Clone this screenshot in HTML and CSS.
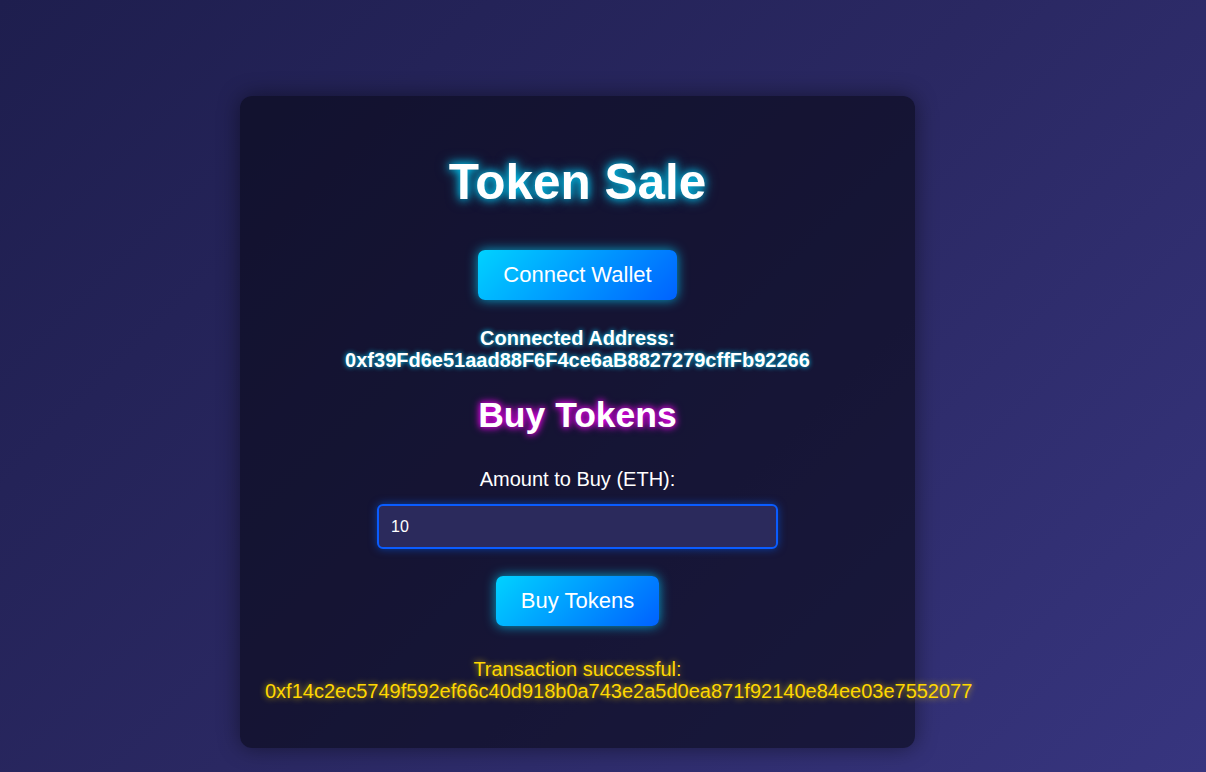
FILE: index.html
```html
<!DOCTYPE html>
<html lang="en">
<head>
<meta charset="utf-8">
<title>Token Sale</title>
<link rel="stylesheet" href="styles.css">
</head>
<body>
  <main class="card">
    <h1 class="title">Token Sale</h1>
    <button class="btn btn-connect" type="button">Connect Wallet</button>
    <p class="address">Connected Address: 0xf39Fd6e51aad88F6F4ce6aB8827279cffFb92266</p>
    <h2 class="subtitle">Buy Tokens</h2>
    <label class="label" for="amount">Amount to Buy (ETH):</label>
    <input class="amount" id="amount" type="text" value="10">
    <button class="btn btn-buy" type="button">Buy Tokens</button>
    <p class="status">Transaction successful: 0xf14c2ec5749f592ef66c40d918b0a743e2a5d0ea871f92140e84ee03e7552077</p>
  </main>
</body>
</html>
```
FILE: styles.css
```css
html, body {
  margin: 0;
}

body {
  min-height: 100vh;
  box-sizing: border-box;
  padding: 96px 51px 0 0;
  background: linear-gradient(135deg, #1e1e4e 0%, #2a2862 50%, #37357f 100%);
  font-family: "Liberation Sans", Arial, sans-serif;
  color: #ffffff;
}

.card {
  width: 675px;
  height: 652px;
  box-sizing: border-box;
  margin: 0 auto;
  padding: 25px;
  border-radius: 12px;
  background: rgba(10, 10, 25, 0.63);
  box-shadow: 0 0 22px rgba(0, 0, 0, 0.45);
  display: flex;
  flex-direction: column;
  align-items: center;
  text-align: center;
}

.title {
  margin: 33px 0 40px;
  font-size: 49.5px;
  line-height: 56px;
  font-weight: bold;
  color: #ffffff;
  text-shadow: 0 0 8px #00d4ff, 0 0 14px rgba(0, 212, 255, 0.6);
}

.btn {
  border: none;
  border-radius: 7px;
  padding: 12px 25px;
  font-family: "Liberation Sans", Arial, sans-serif;
  font-size: 22px;
  line-height: 26px;
  color: #ffffff;
  background: linear-gradient(135deg, #00d2ff 0%, #0062ff 100%);
  box-shadow: 0 0 12px rgba(0, 212, 255, 0.75);
  cursor: pointer;
}

.address {
  align-self: stretch;
  margin: 27px 0 0;
  font-size: 20px;
  line-height: 22px;
  font-weight: bold;
  color: #ffffff;
  text-shadow: 0 0 5px #00d4ff;
}

.subtitle {
  margin: 24px 0 0;
  font-size: 35.5px;
  line-height: 40px;
  font-weight: bold;
  color: #ffffff;
  text-shadow: 0 0 6px #ff00ff, 0 0 10px rgba(255, 0, 255, 0.6);
}

.label {
  margin: 33px 0 0;
  font-size: 20px;
  line-height: 23px;
  color: #ffffff;
}

.amount {
  margin: 13px 0 0;
  width: 401px;
  height: 45px;
  box-sizing: border-box;
  padding: 0 12px;
  border: 2px solid #0a5cff;
  border-radius: 6px;
  background: #2b2a5c;
  color: #ffffff;
  font-family: "Liberation Sans", Arial, sans-serif;
  font-size: 16px;
  box-shadow: 0 0 8px rgba(0, 98, 255, 0.55);
  outline: none;
}

.btn-buy {
  margin-top: 27px;
}

.status {
  align-self: stretch;
  margin: 31.5px 0 0;
  font-size: 20px;
  line-height: 22px;
  color: #ffd700;
  text-shadow: 0 0 6px rgba(255, 215, 0, 0.8);
}
```
